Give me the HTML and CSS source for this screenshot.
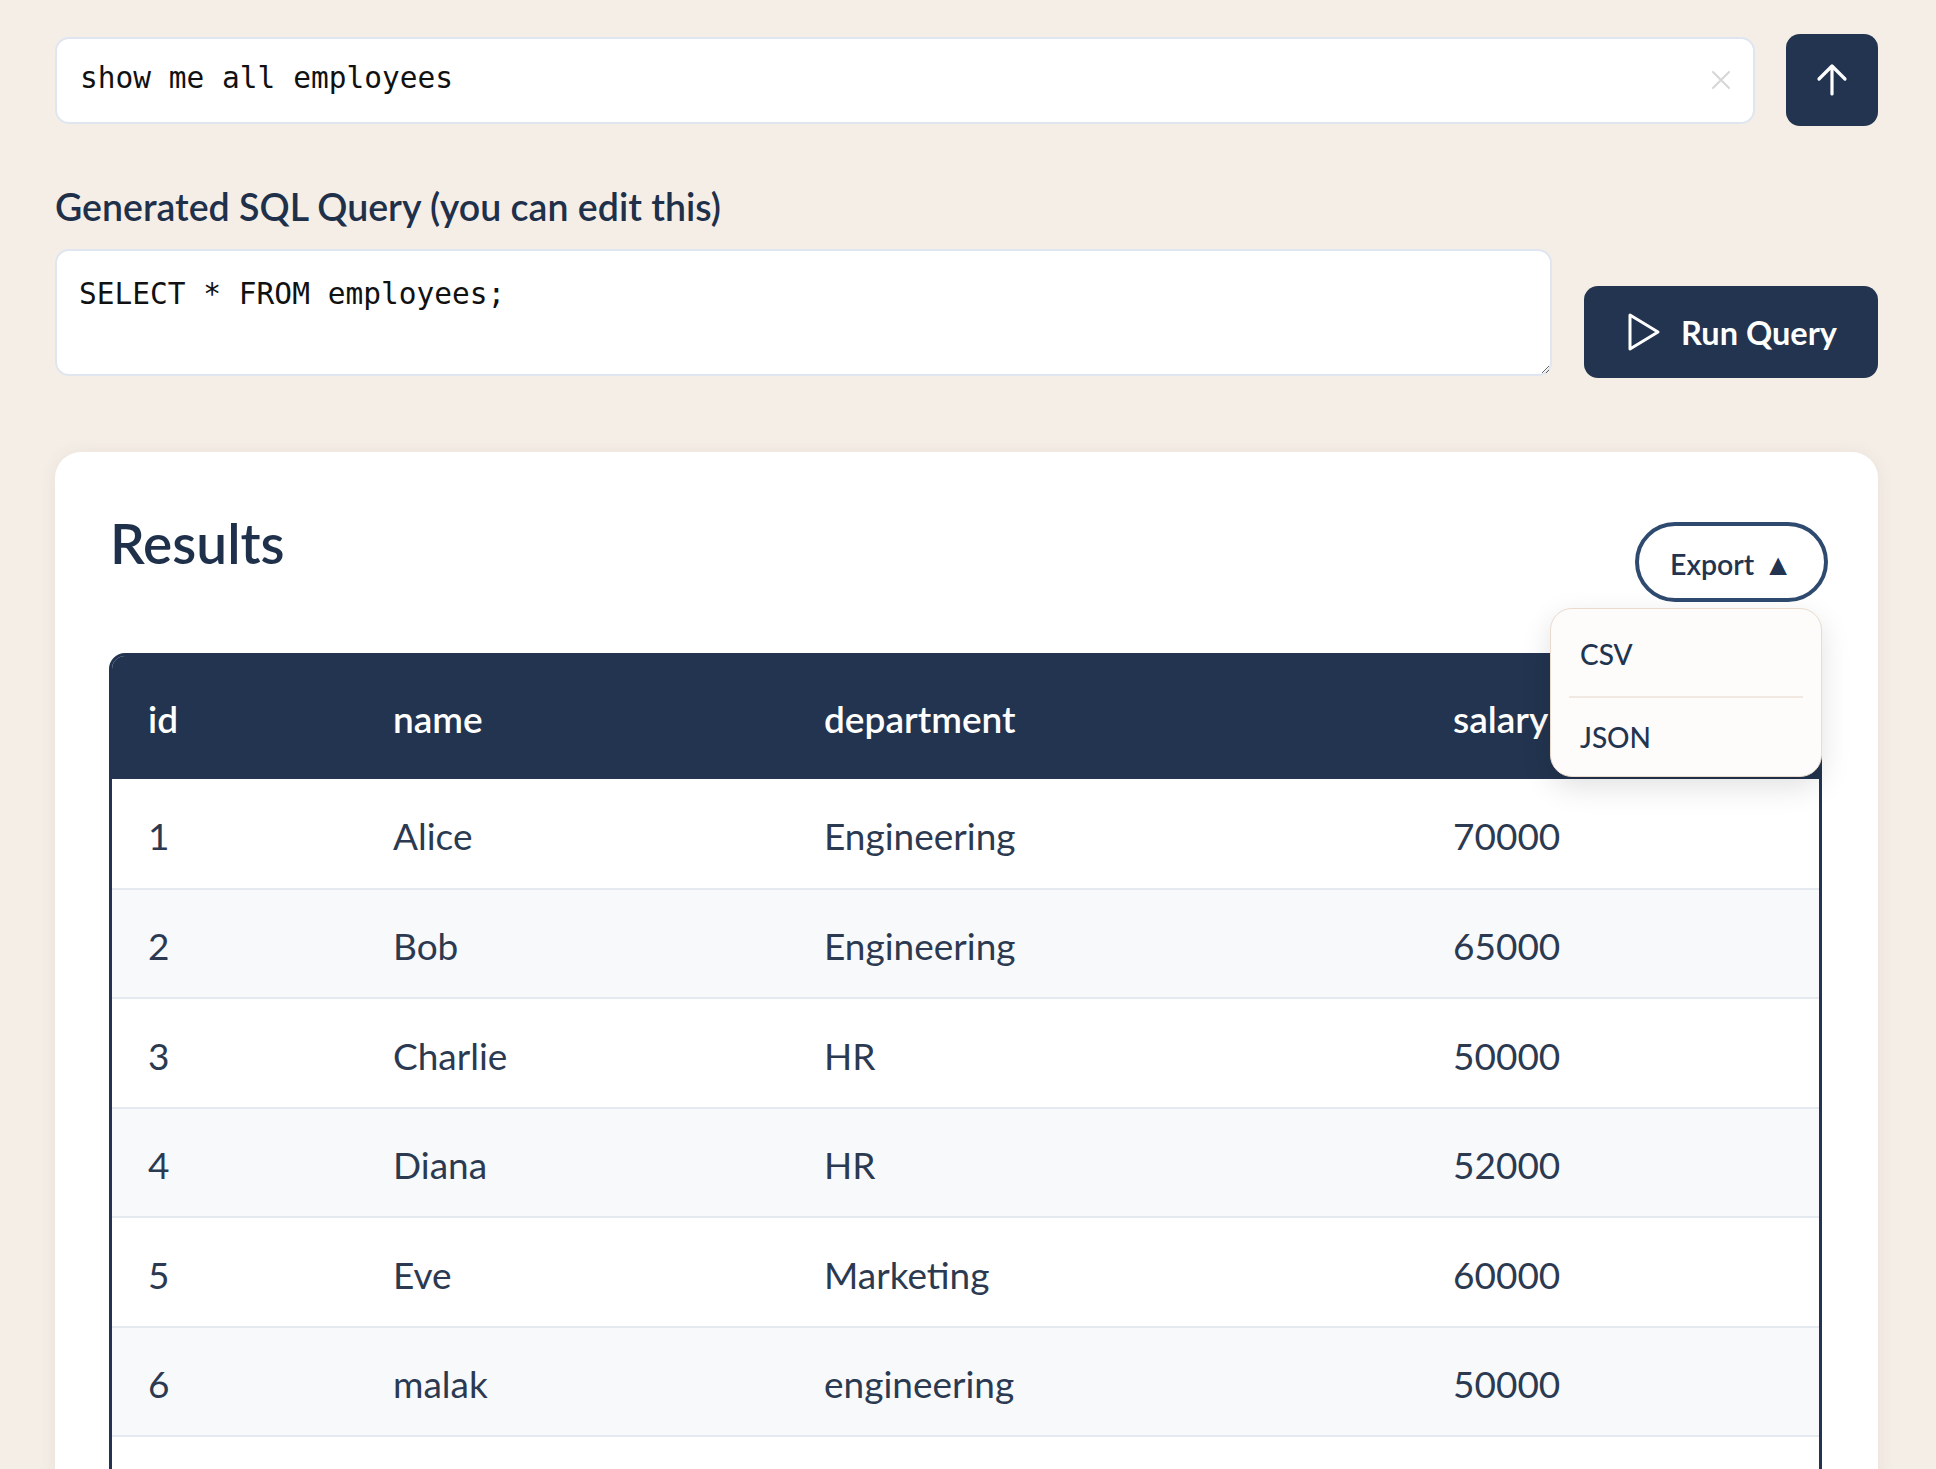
FILE: index.html
```html
<!DOCTYPE html>
<html lang="en">
<head>
<meta charset="utf-8">
<title>SQL Assistant</title>
<link rel="stylesheet" href="styles.css">
</head>
<body>
<div class="page">
  <div class="ask-row">
    <div class="ask-input">
      <span class="ask-text">show me all employees</span>
      <svg class="clear-icon" viewBox="0 0 20 20" width="20" height="20"><path d="M2 2 L18 18 M18 2 L2 18" stroke="#d6d6d6" stroke-width="2" fill="none" stroke-linecap="round"/></svg>
    </div>
    <button class="send-btn" aria-label="Send">
      <svg viewBox="0 0 34 34" width="34" height="34"><path d="M17 31 V3 M4 16 L17 3 L30 16" stroke="#fff" stroke-width="3.2" fill="none" stroke-linecap="round" stroke-linejoin="round"/></svg>
    </button>
  </div>

  <h3 class="sql-label">Generated SQL Query (you can edit this)</h3>
  <div class="sql-row">
    <textarea class="sql-box" spellcheck="false">SELECT * FROM employees;</textarea>
    <button class="run-btn">
      <svg viewBox="0 0 34 40" width="34" height="40"><path d="M3 3 L31 20 L3 37 Z" stroke="#fff" stroke-width="3" fill="none" stroke-linejoin="round"/></svg>
      <span>Run Query</span>
    </button>
  </div>

  <section class="card">
    <div class="card-head">
      <h2 class="card-title">Results</h2>
      <div class="export">
        <button class="export-btn">Export <span class="caret">▲</span></button>
        <div class="export-menu">
          <div class="export-item">CSV</div>
          <div class="export-item">JSON</div>
        </div>
      </div>
    </div>
    <div class="table-wrap">
      <table class="results">
        <colgroup>
          <col class="c-id"><col class="c-name"><col class="c-dept"><col class="c-sal">
        </colgroup>
        <thead>
          <tr><th>id</th><th>name</th><th>department</th><th>salary</th></tr>
        </thead>
        <tbody>
          <tr><td>1</td><td>Alice</td><td>Engineering</td><td>70000</td></tr>
          <tr><td>2</td><td>Bob</td><td>Engineering</td><td>65000</td></tr>
          <tr><td>3</td><td>Charlie</td><td>HR</td><td>50000</td></tr>
          <tr><td>4</td><td>Diana</td><td>HR</td><td>52000</td></tr>
          <tr><td>5</td><td>Eve</td><td>Marketing</td><td>60000</td></tr>
          <tr><td>6</td><td>malak</td><td>engineering</td><td>50000</td></tr>
          <tr class="blank-row"><td></td><td></td><td></td><td></td></tr>
        </tbody>
      </table>
    </div>
  </section>
</div>
</body>
</html>
```

FILE: styles.css
```css
* { box-sizing: border-box; }

html, body {
  margin: 0;
  background: #f5eee7;
  font-family: "Lato", "Open Sans", sans-serif;
  color: #1f304b;
}

.page {
  padding: 34px 58px 0 55px;
}

.ask-row {
  display: flex;
  align-items: center;
  gap: 31px;
}

.ask-input {
  flex: 1;
  height: 87px;
  background: #fff;
  border: 2px solid #dfe6ef;
  border-radius: 14px;
  display: flex;
  align-items: center;
  padding: 0 22px 4px 23px;
}

.ask-text {
  flex: 1;
  font-family: "DejaVu Sans Mono", "Liberation Mono", monospace;
  font-size: 29.5px;
  color: #111;
}

.clear-icon { display: block; margin-top: 4px; }

.send-btn {
  width: 92px;
  height: 92px;
  border: none;
  border-radius: 14px;
  background: #22344f;
  display: flex;
  align-items: center;
  justify-content: center;
  padding: 0;
}

.sql-label {
  margin: 60px 0 21px 0;
  font-size: 37.5px;
  font-weight: 600;
  line-height: 42px;
  color: #1f304b;
}

.sql-row {
  display: flex;
  align-items: flex-end;
  gap: 32px;
}

.sql-box {
  flex: 1;
  height: 127px;
  margin: 0 0 2px 0;
  background: #fff;
  border: 2px solid #dfe6ef;
  border-radius: 14px;
  padding: 26px 22px 20px 22px;
  font-family: "DejaVu Sans Mono", "Liberation Mono", monospace;
  font-size: 29.5px;
  color: #111;
  outline: none;
  display: block;
}

.run-btn {
  width: 294px;
  height: 92px;
  border: none;
  border-radius: 14px;
  background: #22344f;
  color: #fff;
  display: flex;
  align-items: center;
  justify-content: center;
  gap: 20px;
  font-family: "Lato", "Open Sans", sans-serif;
  font-size: 32.5px;
  font-weight: 700;
  padding: 0 0 0 2px;
}

.run-btn svg { display: block; }

.card {
  margin-top: 74px;
  background: #fff;
  border-radius: 26px;
  padding: 58px 56px 56px 54px;
  box-shadow: 0 2px 18px rgba(80, 60, 40, 0.08);
}

.card-head {
  display: flex;
  justify-content: space-between;
  align-items: flex-start;
  margin-bottom: 51px;
}

.card-title {
  margin: 0 0 0 1px;
  font-size: 55px;
  font-weight: 600;
  line-height: 67px;
  color: #1f304b;
}

.export {
  position: relative;
  margin-top: 12px;
  margin-right: -6px;
}

.export-btn {
  height: 80px;
  width: 193px;
  border: 4px solid #2e4a6f;
  border-radius: 40px;
  background: #fff;
  color: #22344f;
  font-family: "Lato", "Open Sans", sans-serif;
  font-size: 28.5px;
  font-weight: 600;
  padding: 3px 0 0 0;
}

.caret {
  font-size: 30px;
  margin-left: 2px;
}

.export-menu {
  position: absolute;
  right: 6px;
  top: 86px;
  width: 272px;
  background: #fdfcfb;
  border: 1.5px solid #eadbce;
  border-radius: 22px;
  box-shadow: 0 10px 30px rgba(0, 0, 0, 0.12);
  padding: 3px 18px 0 18px;
  z-index: 5;
}

.export-item {
  height: 84px;
  display: flex;
  align-items: center;
  padding-left: 11px;
  font-size: 28px;
  font-weight: 500;
  color: #22344f;
}

.export-item + .export-item {
  border-top: 2px solid #f1e8e1;
  height: 80px;
}

.table-wrap {
  border: 3px solid #22344f;
  border-radius: 16px 16px 0 0;
  overflow: hidden;
}

.results {
  width: 100%;
  border-collapse: collapse;
  table-layout: fixed;
}

.c-id { width: 245px; }
.c-name { width: 431px; }
.c-dept { width: 629px; }
.c-sal { width: 402px; }

.results th {
  background: #22344f;
  color: #fff;
  text-align: left;
  font-size: 37px;
  font-weight: 600;
  height: 123px;
  padding: 2px 36px 0 36px;
}

.results td {
  height: 109.5px;
  padding: 5px 36px 0 36px;
  font-size: 37px;
  font-weight: 400;
  color: #2c3a51;
  border-bottom: 2px solid #e5eaf0;
}

.results tbody tr:nth-child(even) td {
  background: #f7f9fb;
}
```
